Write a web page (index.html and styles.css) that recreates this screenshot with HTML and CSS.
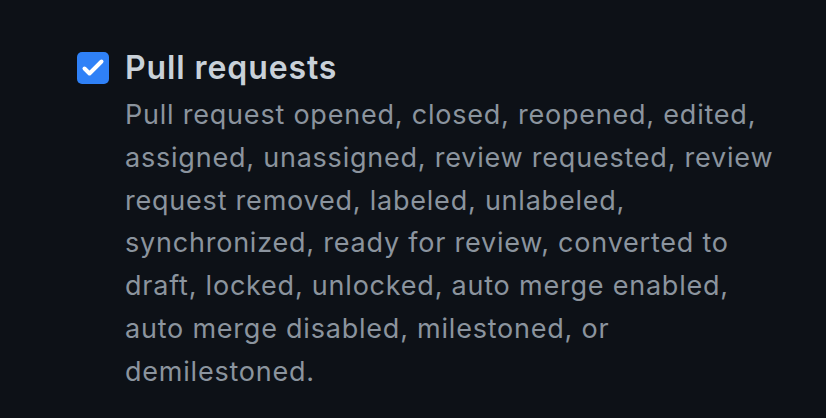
FILE: index.html
```html
<!DOCTYPE html>
<html>
<head>
<meta charset="utf-8">
<link rel="stylesheet" href="styles.css">
</head>
<body>
<div class="page">
  <div class="option">
    <span class="checkbox">
      <svg viewBox="0 0 32 32" width="32" height="32"><path d="M7.5 16.5 12.5 21.5 24.5 9.5" fill="none" stroke="#fff" stroke-width="4" stroke-linecap="round" stroke-linejoin="round"/></svg>
    </span>
    <div class="body">
      <div class="title">Pull requests</div>
      <p class="desc">Pull request opened, closed, reopened, edited, assigned, unassigned, review requested, review request removed, labeled, unlabeled, synchronized, ready for review, converted to draft, locked, unlocked, auto merge enabled, auto merge disabled, milestoned, or demilestoned.</p>
    </div>
  </div>
</div>
</body>
</html>
```
FILE: styles.css
```css
html, body {
  margin: 0;
  padding: 0;
  background: #0d1117;
  height: 100%;
}
.page {
  padding: 52px 0 0 77px;
  font-family: Inter, "Liberation Sans", Arial, sans-serif;
}
.option {
  display: flex;
  gap: 16px;
  align-items: flex-start;
}
.checkbox {
  flex: none;
  width: 32px;
  height: 32px;
  border-radius: 5px;
  background: #2f81f7;
  display: flex;
  align-items: center;
  justify-content: center;
}
.body {
  width: 664px;
}
.title {
  font-size: 32px;
  font-weight: 600;
  letter-spacing: 0.9px;
  color: #c9d1d9;
  line-height: 36px;
  margin-top: -2px;
}
.desc {
  margin: 8px 0 0;
  font-size: 27px;
  letter-spacing: 0.78px;
  line-height: 42.8px;
  color: #8b949e;
}
```
